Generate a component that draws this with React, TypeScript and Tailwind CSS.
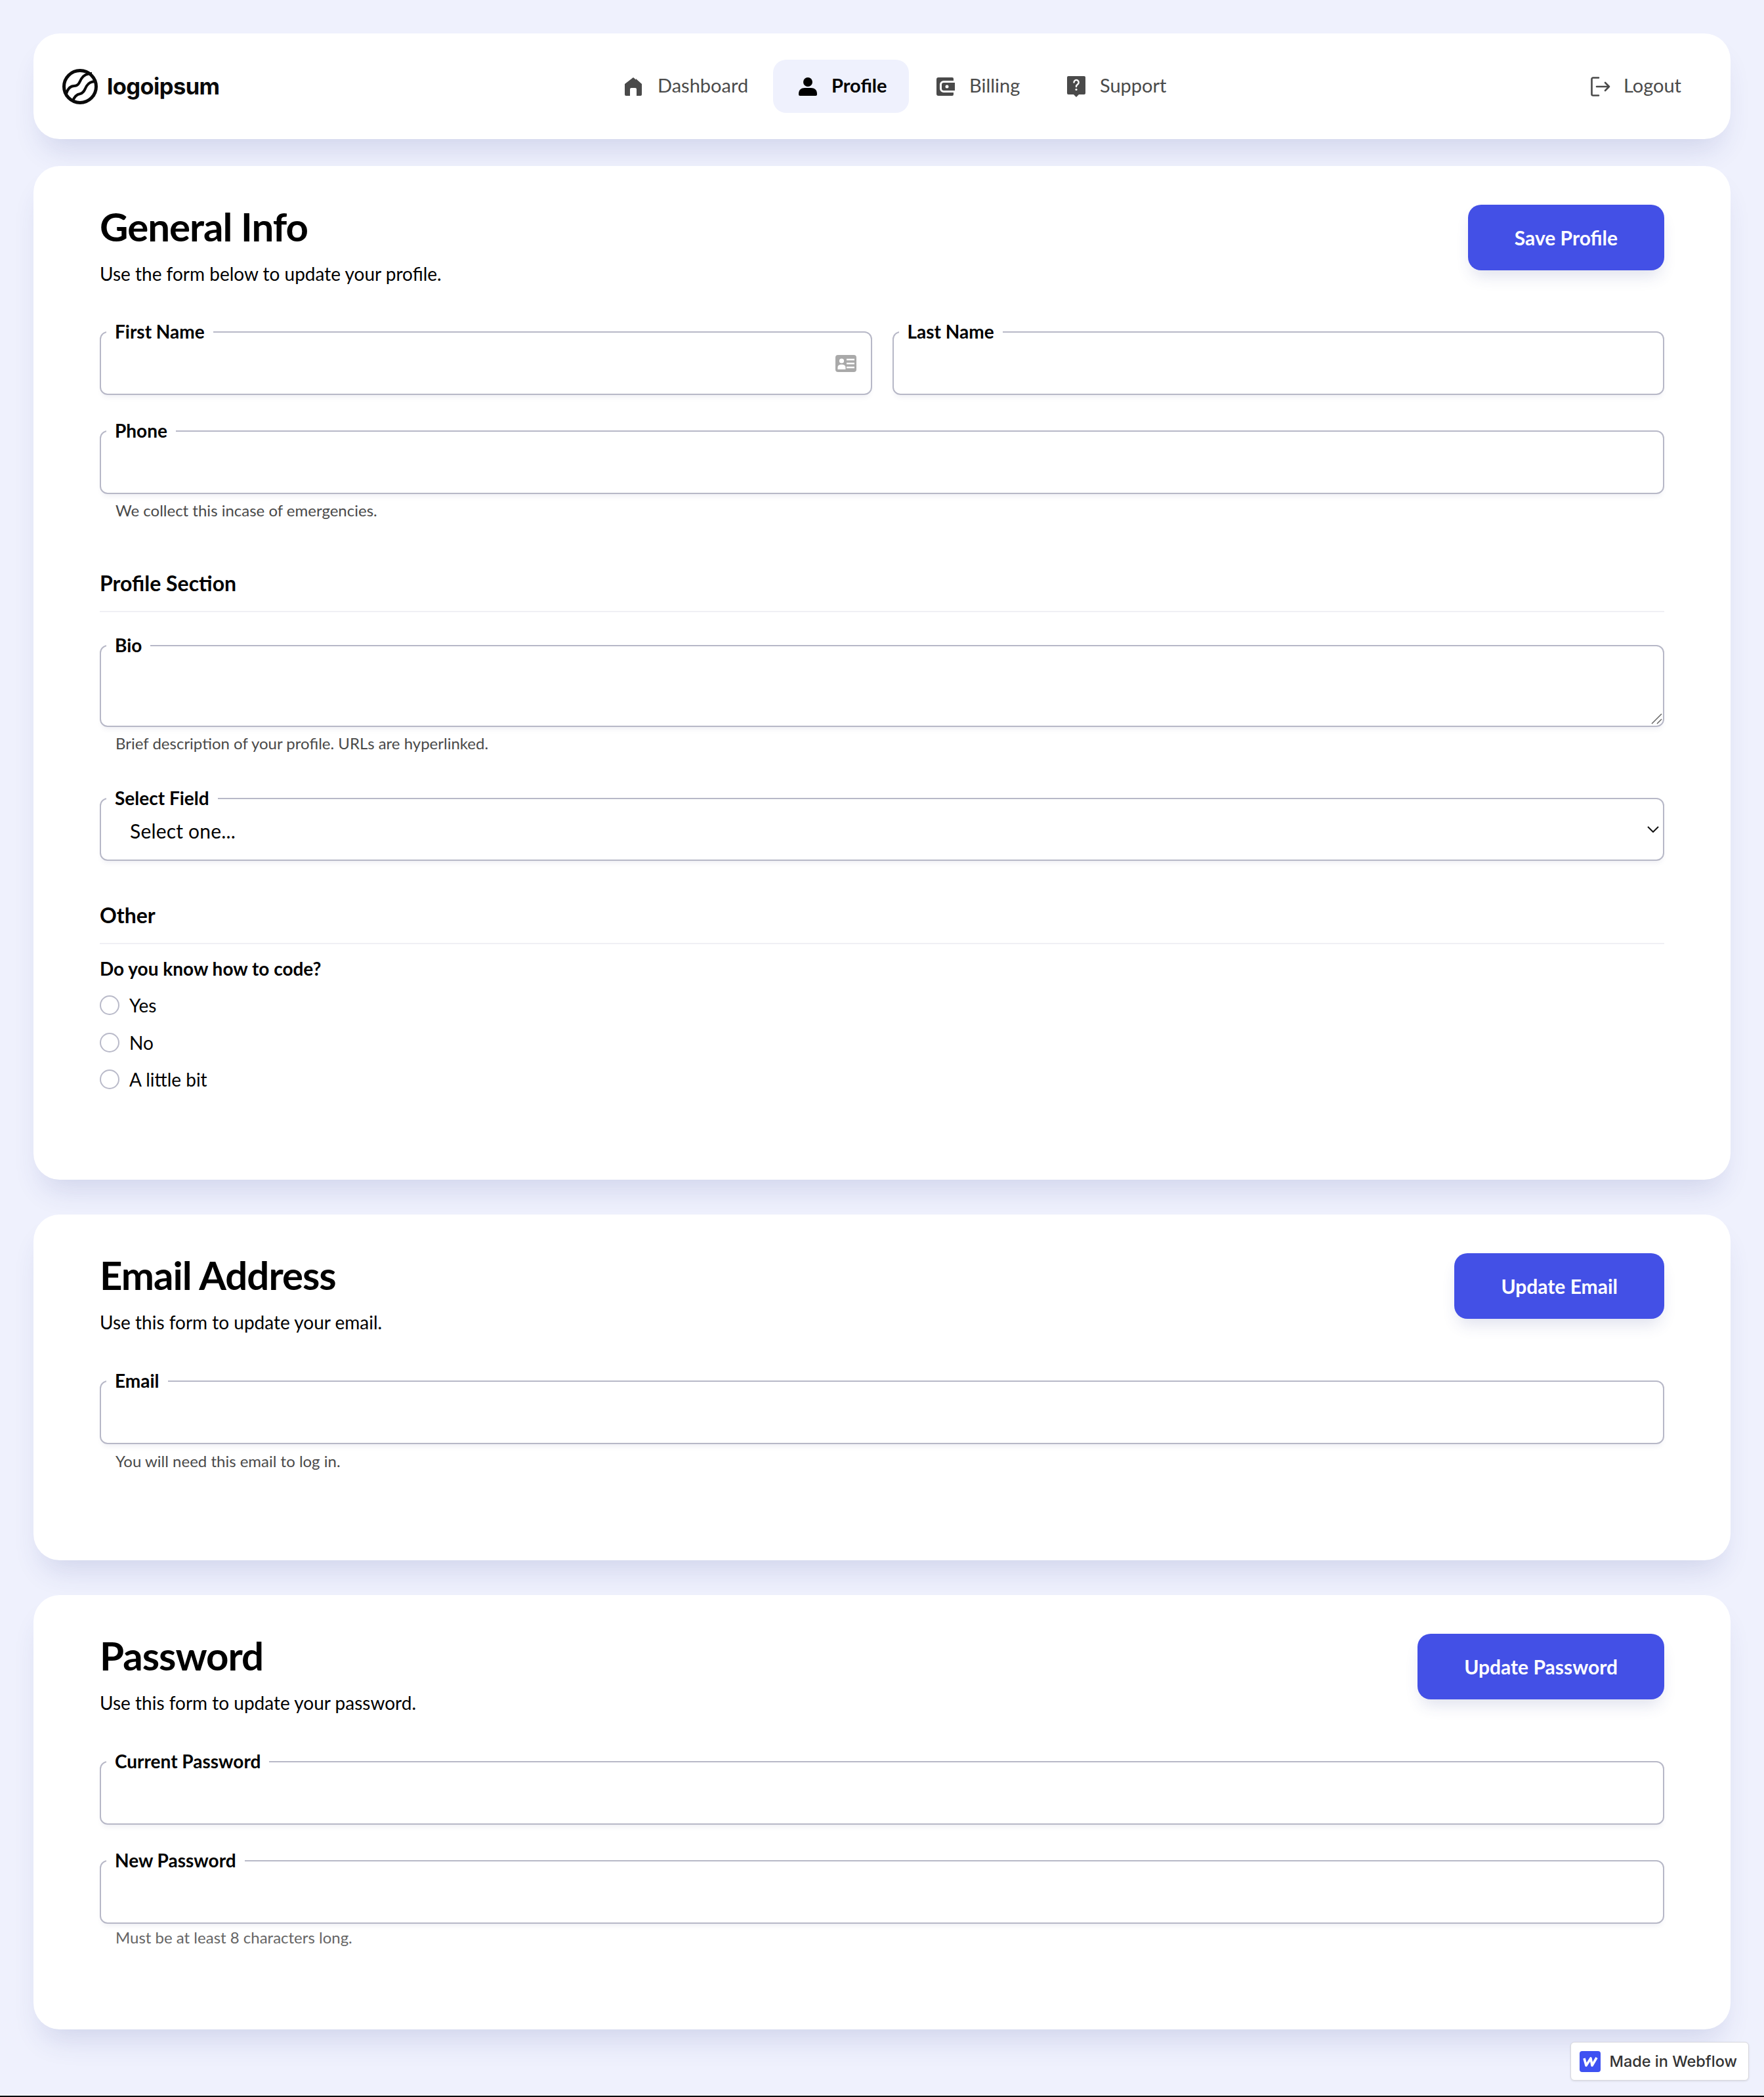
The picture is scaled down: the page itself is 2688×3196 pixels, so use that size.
import { ReactNode } from 'react';

function Logo() {
  return (
    <svg viewBox="0 0 54 54" className="w-[54px] h-[54px] shrink-0" fill="none" stroke="#0a0a0a" strokeWidth="5">
      <circle cx="27" cy="27" r="24.5" />
      <path d="M6 38C8 31 12 26 18 26C25 26 26 20 29 15C32 10 38 7 45 7" strokeWidth="4" />
      <path d="M16 49C18 43 21 39 27 38C33 37 34 31 37 26C40 21 45 19 51 19" strokeWidth="4" />
    </svg>
  );
}

function HomeIcon() {
  return (
    <svg viewBox="0 0 26 28" className="w-[26px] h-[28px]" fill="#4a4a4a">
      <path d="M13 0l4 3.5V2h0l9 8v16a2 2 0 0 1-2 2h-6V18a2 2 0 0 0-2-2H10a2 2 0 0 0-2 2v10H2a2 2 0 0 1-2-2V10z" />
    </svg>
  );
}

function UserIcon() {
  return (
    <svg viewBox="0 0 28 28" className="w-[28px] h-[28px]" fill="#000">
      <circle cx="14" cy="7" r="7" />
      <path d="M0 25c0-6 4-9 9-9h10c5 0 9 3 9 9v1a2 2 0 0 1-2 2H2a2 2 0 0 1-2-2z" />
    </svg>
  );
}

function WalletIcon() {
  return (
    <svg viewBox="0 0 28 28" className="w-[28px] h-[28px]">
      <path fill="#4a4a4a" d="M3 0h21a2 2 0 0 1 2 2v3H11a6 6 0 0 0-6 6v6a6 6 0 0 0 6 6h15v3a2 2 0 0 1-2 2H3a3 3 0 0 1-3-3V3a3 3 0 0 1 3-3z" />
      <path fill="#4a4a4a" d="M11 8h17v12H11a3 3 0 0 1-3-3v-6a3 3 0 0 1 3-3z" />
      <circle cx="16" cy="14" r="2.5" fill="#fff" />
      <path fill="none" stroke="#fff" strokeWidth="1.5" d="M11 6.5h15" />
    </svg>
  );
}

function SupportIcon() {
  return (
    <svg viewBox="0 0 28 32" className="w-[28px] h-[32px]">
      <path fill="#4a4a4a" d="M2 0h24a2 2 0 0 1 2 2v24a2 2 0 0 1-2 2h-8l-4 4-4-4H2a2 2 0 0 1-2-2V2a2 2 0 0 1 2-2z" />
      <path fill="none" stroke="#fff" strokeWidth="2.4" strokeLinecap="round" d="M10.5 9.5a3.6 3.6 0 1 1 5.6 3c-1.4 1-2.1 1.8-2.1 3.5" />
      <circle cx="14" cy="20.5" r="1.6" fill="#fff" />
    </svg>
  );
}

function LogoutIcon() {
  return (
    <svg viewBox="0 0 30 30" className="w-[30px] h-[30px]" fill="none" stroke="#4a4a4a" strokeWidth="2.6" strokeLinecap="round" strokeLinejoin="round">
      <path d="M12 1.5H3.5a2 2 0 0 0-2 2v23a2 2 0 0 0 2 2H12" />
      <path d="M9 15h19M22 9l6 6-6 6" />
    </svg>
  );
}

function CardIcon() {
  return (
    <svg viewBox="0 0 32 26" className="w-[32px] h-[26px]">
      <rect width="32" height="26" rx="4" fill="#a9a9a9" />
      <circle cx="9.5" cy="9" r="3.6" fill="#fff" />
      <path fill="#fff" d="M3.5 22v-3c0-3 2-4.5 6-4.5s6 1.5 6 4.5v3z" />
      <path fill="none" stroke="#fff" strokeWidth="2.4" d="M17 7h12M17 13h12M17 19h12" />
    </svg>
  );
}

function NavItem({ icon, label, active, width, pad }: { icon: ReactNode; label: string; active?: boolean; width: string; pad: string }) {
  return (
    <a className={`flex items-center h-[81px] rounded-[20px] ${width} ${pad} ${active ? 'bg-[#eff1fd] text-black font-bold' : 'text-[#4a4a4a]'}`}>
      <span className="w-[50px] shrink-0 flex items-center">{icon}</span>
      <span className="text-[29px] pb-[3px]">{label}</span>
    </a>
  );
}

function Legend({ children }: { children: ReactNode }) {
  return <legend className="ml-[8px] px-[13px] pb-[2px] text-[28px] leading-[30px] font-bold text-black">{children}</legend>;
}

const boxClass = 'relative border-2 border-[#b7b8c7] rounded-[12px] shadow-[0_6px_8px_-4px_rgba(60,60,120,0.1)]';

function Field({ label, className = '', help, helpClass, icon }: { label: string; className?: string; help?: string; helpClass?: string; icon?: ReactNode }) {
  return (
    <div className={className}>
      <fieldset className={boxClass}>
        <Legend>{label}</Legend>
        <input className="block w-full h-[78px] bg-transparent outline-none" aria-label={label} />
        {icon && <span className="absolute right-[22px] top-[19px]">{icon}</span>}
      </fieldset>
      {help && <Help className={helpClass}>{help}</Help>}
    </div>
  );
}

function Help({ children, className = 'mt-[10px] text-[#4a4a4a]' }: { children: ReactNode; className?: string }) {
  return <p className={`ml-[24px] text-[24px] leading-[32px] ${className}`}>{children}</p>;
}

function SectionTitle({ children }: { children: ReactNode }) {
  return (
    <div className="border-b-2 border-[#f0f0f4] pb-[22px]">
      <h3 className="text-[32px] leading-[40px] font-bold text-black">{children}</h3>
    </div>
  );
}

function Card({ title, sub, button, children, height }: { title: string; sub: string; button: string; children: ReactNode; height: string }) {
  return (
    <section className={`bg-white rounded-[40px] px-[101px] pt-[60px] shadow-[0_28px_44px_-14px_rgba(50,60,140,0.16)] ${height}`}>
      <div className="flex justify-between items-start h-[193px]">
        <div>
          <h2 className="text-[60px] leading-[64px] font-bold text-black tracking-[-1px]">{title}</h2>
          <p className="mt-[22px] text-[28px] leading-[36px] text-black">{sub}</p>
        </div>
        <button className="-mt-[1px] h-[100px] px-[71px] rounded-[20px] bg-[#4350e6] text-white text-[30px] font-bold shadow-[0_14px_24px_-6px_rgba(50,60,140,0.16)]">
          {button}
        </button>
      </div>
      {children}
    </section>
  );
}

function Radio({ label }: { label: string }) {
  return (
    <label className="flex items-center h-[56.5px] gap-[15px]">
      <input type="radio" name="code" className="appearance-none w-[30px] h-[30px] rounded-full border-2 border-[#b9bac9] bg-white" />
      <span className="text-[28px] text-black">{label}</span>
    </label>
  );
}

export default function App() {
  return (
    <div className="relative bg-[#eff1fd] min-h-[3196px] px-[51px] pt-[51px] font-['Lato',sans-serif] text-black border-b-2 border-black overflow-hidden">
      <nav className="flex items-center h-[161px] bg-white rounded-[40px] pl-[44px] pr-[75px] shadow-[0_28px_44px_-14px_rgba(50,60,140,0.16)]">
        <div className="flex items-center gap-[14px] w-[821px]">
          <Logo />
          <span className="font-['Inter',sans-serif] font-bold text-[34.5px] tracking-[-0.6px] text-[#0a0a0a]">logoipsum</span>
        </div>
        <div className="flex items-center">
          <NavItem icon={<HomeIcon />} label="Dashboard" width="w-[262px]" pad="pl-[36px]" />
          <NavItem icon={<UserIcon />} label="Profile" active width="w-[207px]" pad="pl-[39px]" />
          <NavItem icon={<WalletIcon />} label="Billing" width="w-[205px]" pad="pl-[42px]" />
          <NavItem icon={<SupportIcon />} label="Support" width="w-[185px]" pad="pl-[36px]" />
        </div>
        <a className="ml-auto flex items-center gap-[20px] text-[29px] text-[#4a4a4a]">
          <LogoutIcon />
          <span className="pb-[3px]">Logout</span>
        </a>
      </nav>

      <div className="mt-[41px]">
        <Card title="General Info" sub="Use the form below to update your profile." button="Save Profile" height="h-[1545px]">
          <div className="flex gap-[31px] -mt-[16px]">
            <Field label="First Name" className="flex-1" icon={<CardIcon />} />
            <Field label="Last Name" className="flex-1" />
          </div>
          <Field label="Phone" className="mt-[39px]" help="We collect this incase of emergencies." helpClass="mt-[9px] text-[#4a4a4a]" />
          <div className="mt-[75px]">
            <SectionTitle>Profile Section</SectionTitle>
          </div>
          <div className="mt-[35px]">
            <fieldset className={boxClass}>
              <Legend>Bio</Legend>
              <textarea aria-label="Bio" className="block w-full h-[106px] bg-transparent outline-none resize-none" />
              <svg viewBox="0 0 18 18" className="absolute right-[1px] bottom-[2px] w-[18px] h-[18px]" fill="none" stroke="#666" strokeWidth="1.5">
                <path d="M2 17L17 2M10 17l7-7" />
              </svg>
            </fieldset>
            <Help className="mt-[9px] text-[#4a4a4a]">Brief description of your profile. URLs are hyperlinked.</Help>
          </div>
          <fieldset className={`${boxClass} mt-[52px]`}>
            <Legend>Select Field</Legend>
            <select aria-label="Select Field" className="block w-full h-[77px] pl-[44px] pb-[11px] appearance-none bg-transparent outline-none text-[30px] tracking-[0.2px] text-black">
              <option>Select one...</option>
            </select>
            <svg viewBox="0 0 18 10" className="absolute right-[6px] top-[26px] w-[18px] h-[10px]" fill="none" stroke="#111" strokeWidth="2">
              <path d="M1 1l8 8 8-8" />
            </svg>
          </fieldset>
          <div className="mt-[63px]">
            <SectionTitle>Other</SectionTitle>
          </div>
          <p className="mt-[19px] text-[28px] leading-[36px] font-bold text-black">Do you know how to code?</p>
          <div className="mt-[10px]">
            <Radio label="Yes" />
            <Radio label="No" />
            <Radio label="A little bit" />
          </div>
        </Card>
      </div>

      <div className="mt-[53px]">
        <Card title="Email Address" sub="Use this form to update your email." button="Update Email" height="h-[527px]">
          <div className="-mt-[15px]">
            <Field label="Email" help="You will need this email to log in." />
          </div>
        </Card>
      </div>

      <div className="mt-[53px]">
        <Card title="Password" sub="Use this form to update your password." button="Update Password" height="h-[662px]">
          <div className="-mt-[15px]">
            <Field label="Current Password" />
          </div>
          <Field label="New Password" className="mt-[39px]" help="Must be at least 8 characters long." helpClass="mt-[5px] text-[#666]" />
        </Card>
      </div>

      <a className="absolute right-[23px] bottom-[23px] flex items-center gap-[13px] h-[59px] pl-[13px] pr-[17px] bg-white rounded-[6px] border border-[#d8d8de] shadow-[0_1px_3px_rgba(0,0,0,0.1)] font-['Inter',sans-serif] text-[23.5px] font-medium text-[#333]">
        <svg viewBox="0 0 32 32" className="w-[32px] h-[32px]">
          <rect width="32" height="32" rx="4" fill="#3e51f2" />
          <path fill="none" stroke="#fff" strokeWidth="3.6" strokeLinejoin="round" d="M7 11L10 22L17 11L19 22L26 10" />
        </svg>
        Made in Webflow
      </a>
    </div>
  );
}
